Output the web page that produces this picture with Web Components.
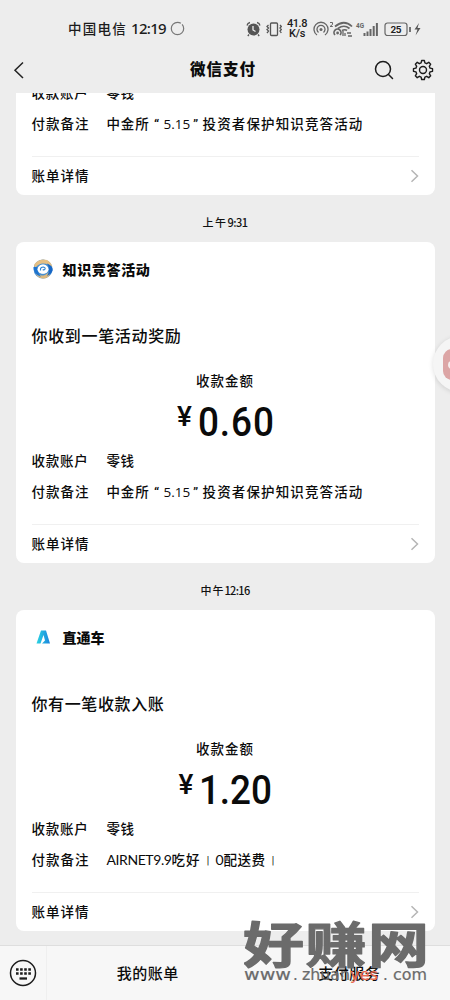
<!DOCTYPE html>
<html lang="zh-CN">
<head>
<meta charset="utf-8">
<title>微信支付</title>
<style>
body{margin:0;background:#ededed;font-family:"Noto Sans CJK SC",sans-serif;color:#0b0b0b}
</style>
</head>
<body>
<pay-app></pay-app>
<script>
const make = (name, html, after) => customElements.define(name, class extends HTMLElement {
  constructor() {
    super();
    this.attachShadow({ mode: 'open' }).innerHTML = html;
  }
  connectedCallback() { if (after) after(this); }
});

make('pay-app', `<style>
:host{display:flex;flex-direction:column;width:450px;height:1000px;overflow:hidden;position:relative;background:#ededed}
main{flex:1;min-height:0;overflow:hidden;display:flex;flex-direction:column;justify-content:flex-end;padding:0 15.5px 14px}
.num{font-family:"Open Sans",sans-serif;font-weight:400}
.q{font-family:Roboto,sans-serif}
.lat{font-family:Lato,sans-serif;font-weight:400;font-size:14px}
</style>
<status-bar></status-bar>
<nav-bar></nav-bar>
<main>
<bill-card tail>
<span slot="memo"><fit-text w="43">中金所</fit-text><fit-text class="q" w="14" c>“</fit-text><fit-text class="num" w="25" c>5.15</fit-text><fit-text class="q" w="14" c>”</fit-text><fit-text w="161">投资者保护知识竞答活动</fit-text></span></bill-card>
<time-mark><fit-text w="25">上午</fit-text><fit-text w="20">9:31</fit-text></time-mark>
<bill-card><swirl-logo slot="logo"></swirl-logo><fit-text slot="title" w="88">知识竞答活动</fit-text><fit-text slot="head" w="150">你收到一笔活动奖励</fit-text><big-num slot="amount" w="76">0.60</big-num>
<span slot="memo"><fit-text w="43">中金所</fit-text><fit-text class="q" w="14" c>“</fit-text><fit-text class="num" w="25" c>5.15</fit-text><fit-text class="q" w="14" c>”</fit-text><fit-text w="161">投资者保护知识竞答活动</fit-text></span></bill-card>
<time-mark><fit-text w="24">中午</fit-text><fit-text w="25">12:16</fit-text></time-mark>
<bill-card><peak-logo slot="logo"></peak-logo><fit-text slot="title" w="42">直通车</fit-text><fit-text slot="head" w="133">你有一笔收款入账</fit-text><big-num slot="amount" w="73">1.20</big-num>
<span slot="memo"><fit-text class="lat" w="65">AIRNET9.9</fit-text><fit-text w="29">吃好</fit-text><thin-bar></thin-bar><fit-text class="lat" w="8">0</fit-text><fit-text w="42">配送费</fit-text><thin-bar></thin-bar></span></bill-card>
</main>
<bottom-bar></bottom-bar>
<float-ball></float-ball>
<site-mark></site-mark>`);

make('thin-bar', `<style>:host{display:inline-block;width:15px;text-align:center;font:400 10px/10px Roboto,sans-serif;vertical-align:1px}</style>|`);

make('big-num', `<style>:host{display:block;height:45px}svg{display:block;overflow:visible}</style><svg height="45"><text x="1" y="36" font-family="Roboto" font-weight="500" font-size="41" fill="#0b0b0b" transform="scale(.9 1)"></text></svg>`, el => {
  const w = +el.getAttribute('w');
  const t = el.shadowRoot.querySelector('text');
  t.textContent = el.textContent.trim();
  t.setAttribute('textLength', w / .9);
  el.shadowRoot.querySelector('svg').setAttribute('width', w);
});

make('status-bar', `<style>
:host{display:flex;height:46px;box-sizing:border-box;padding:11px 28px 0 68px;align-items:center;font-size:13.5px;font-weight:500;color:#1c1c1c}
.cn{margin-top:-2px}
.time{font-family:"Noto Sans",sans-serif;font-size:15px;margin:-2px 0 0 4px}
.ring{margin-left:4px}
.sp{flex:1}
.speed{width:20px;margin:0 6px 0 5px;font:500 11px/10px Roboto,sans-serif;text-align:center}
svg{display:block;flex:none}
</style>
<fit-text class="cn" w="59">中国电信</fit-text><fit-text class="time" w="35">12:19</fit-text>
<svg class="ring" width="15" height="15" viewBox="0 0 15 15" fill="none" stroke="#777" stroke-width="1.2"><circle cx="7.5" cy="7.5" r="6.2" stroke-dasharray="32 1.5"/></svg>
<span class="sp"></span>
<svg width="36" height="16" viewBox="0 0 36 16" fill="none" stroke="#555" stroke-width="1.3"><circle cx="7.5" cy="8.5" r="6" fill="#555" stroke="none"/><path d="M1 4.5Q1.5 2 4 1.5M14 4.5Q13.500 2 11 1.500M3 13.500L1.800 15M12 13.500L13.200 15"/><path d="M7 5V9L9.500 10.500" stroke="#eee"/><rect x="24.500" y="2" width="7" height="12.500" rx="1"/><path d="M22.500 4L21 5.500L22.500 7L21 8.500L22.500 10L21 12M34 4L35.300 5.500L34 7L35.300 8.500L34 10L35.300 12"/></svg>
<div class="speed"><fit-text w="20">41.8</fit-text><br><fit-text w="16">K/s</fit-text></div>
<svg width="66" height="16" viewBox="0 0 66 16" fill="none" stroke="#666" stroke-width="1.3">
<path d="M4 14A7 7 0 1 1 12 14M5.500 11.500A4 4 0 1 1 10.500 11.500"/><circle cx="8" cy="8.500" r="1.500" fill="#666" stroke="none"/>
<path d="M17 1.500H19.500V3.500L17 5.500H19.800" stroke-width="1"/>
<path d="M22 5.500Q31 -2 39 5.500M25 7.500Q31 3 36.500 7.500M22 14A3.500 3.500 0 1 1 27 14M29 9.500Q32 8 34 9.500" stroke-width="1.700"/><circle cx="24.600" cy="12" r="1.400" fill="#666" stroke="none"/><path d="M30 10V15M32 12V15M34 12H38M35 15H39" />
<text x="43" y="6.500" font-family="Roboto" font-size="7" font-weight="700" fill="#666" stroke="none" textLength="8" lengthAdjust="spacingAndGlyphs">4G</text>
<path d="M51.500 12V15M54.500 10.500V15M57.500 8V15M60.700 5V15M63.900 2V15" stroke-width="2"/></svg>
<svg style="margin-left:5px" width="38" height="16" viewBox="0 0 38 16" fill="none" stroke="#666" stroke-width="1.200"><rect x="1" y="2" width="22" height="12.500" rx="2.500"/><path d="M26 6V11" stroke-width="1.800"/><text x="6.500" y="11.800" font-family="Inter" font-size="9" font-weight="700" fill="#222" stroke="none" textLength="11">25</text><path d="M35 2L30.500 8.500H33.500L31.500 14.500L36.500 7H33.500Z" fill="#555" stroke="none"/></svg>`);

make('nav-bar', `<style>
:host{display:flex;height:47px;align-items:center;box-sizing:border-box;padding:0 16px 0 12px}
.title{flex:1;text-align:center;font-size:15.5px;line-height:24px;font-weight:900;padding:0 0 3px 46px}
svg{display:block;flex:none}
</style>
<svg width="14" height="20" viewBox="0 0 14 20" fill="none" stroke="#222" stroke-width="1.500"><path d="M11 2.500L3 10.300L11 18"/></svg>
<div class="title"><fit-text w="66">微信支付</fit-text></div>
<svg width="20" height="20" viewBox="0 0 20 20" fill="none" stroke="#1c1c1c" stroke-width="1.500" stroke-linecap="round"><circle cx="9" cy="9" r="7.500"/><path d="M14.500 14.500L18.500 18.500"/></svg>
<svg style="margin-left:18px" width="22" height="22" viewBox="-11 -11 22 22" fill="none" stroke="#1c1c1c" stroke-width="1.400" stroke-linejoin="round"><g id="g"></g><circle r="3.500"/></svg>`, el => {
  const pts = [];
  for (let i = 0; i < 8; i++) for (const [off, r] of [[-15, 7.3], [-8, 9.6], [8, 9.6], [15, 7.3]]) {
    const a = (i * 45 + off) * Math.PI / 180;
    pts.push((r * Math.sin(a)).toFixed(2) + ' ' + (-r * Math.cos(a)).toFixed(2));
  }
  el.shadowRoot.getElementById('g').innerHTML = '<path d="M' + pts.join('L') + 'Z"/>';
});

make('time-mark', `<style>:host{display:flex;height:47px;padding-top:7px;box-sizing:border-box;flex:none;align-items:center;justify-content:center;font-size:11px;font-weight:500;color:#111}</style><slot></slot>`);

make('bill-card', `<style>
:host{display:flex;flex-direction:column;flex:none;height:321px;box-sizing:border-box;padding:0 16px;background:#fff;border-radius:8px;white-space:nowrap}
:host([tail]){height:118.500px}
:host([tail]) :is(.title,.head,.label,.amount){display:none}
.title{display:flex;align-items:center;height:53px;margin-bottom:1px;font-size:14px;font-weight:800}
.logo{width:31px;height:22px;display:flex;align-items:center}
.head{margin-top:24px;margin-bottom:1px;height:30px;line-height:30px;font-size:16px;font-weight:500}
.label{margin-top:19px;margin-bottom:1px;height:20px;line-height:20px;font-size:13.500px;font-weight:500;text-align:center}
.amount{margin-top:8.500px;height:45px;display:flex;justify-content:center;align-items:center;font:500 41px/45px Roboto,sans-serif;gap:5px;box-sizing:border-box}
.yen{font-size:28px;line-height:34px;align-self:flex-start}
.row{display:flex;height:31px;line-height:30px;font-size:13.500px;font-weight:500}
.k{width:75px;flex:none}
hr{width:100%;height:1px;border:0;background:#f0f0f0;margin:17.500px 0 0}
.foot{height:38px;display:flex;align-items:center;justify-content:space-between;font-size:13.500px;font-weight:500}
.foot fit-text{margin-top:-2px}
svg{display:block}
</style>
<div class="title"><span class="logo"><slot name="logo"></slot></span><slot name="title"></slot></div>
<div class="head"><slot name="head"></slot></div>
<div class="label"><fit-text w="58">收款金额</fit-text></div>
<div class="amount"><span class="yen">¥</span><slot name="amount"></slot></div>
<div class="row"><span class="k"><fit-text w="57">收款账户</fit-text></span><fit-text w="28">零钱</fit-text></div>
<div class="row"><span class="k"><fit-text w="58">付款备注</fit-text></span><slot name="memo"></slot></div>
<hr>
<div class="foot"><fit-text w="58">账单详情</fit-text><svg width="9" height="14" viewBox="0 0 9 14" fill="none" stroke="#b5b5b5" stroke-width="1.500"><path d="M1.500 1.200L7.500 7L1.500 12.800"/></svg></div>`);

make('swirl-logo', `<style>:host{display:block;margin-left:1px}svg{display:block}</style>
<svg width="20" height="20" viewBox="0 0 20 20" fill="none"><circle cx="10" cy="10" r="7" stroke="#4a90d0" stroke-width="5"/>
<path d="M2 4.500Q7-1 14 1Q18 3 19.500 8Q15 4 9 4.500Q4 5.500 2.500 9Q0 6.500 2 4.500Z" fill="#e5bf83"/>
<path d="M3 15Q8 17.500 12 16Q15 15 17 11.500Q18.500 17 12.500 19.300Q6 20.500 3 15Z" fill="#dcb87e"/>
<path d="M14 4.500Q20.500 7 19.500 12Q18 15.500 14 17Q18 10 14 4.500Z" fill="#1767c6"/><path d="M.5 8Q.5 15 8 18Q4 13 4.500 8Z" fill="#1d73cf"/>
<ellipse cx="10" cy="10.200" rx="5.500" ry="4.500" fill="#fff"/><path d="M7.500 11.500Q7 8 10.500 8Q12.500 8.500 12 10Q11 11.500 9.800 10.500" stroke="#2e83d2" stroke-width="1.200"/></svg>`);

make('peak-logo', `<style>:host{display:block;margin-left:4px}svg{display:block}</style>
<svg width="15" height="14" viewBox="0 0 15 14"><defs><linearGradient id="a"><stop stop-color="#2bd5e2"/><stop offset="1" stop-color="#1b83dd"/></linearGradient></defs><path d="M5 .5H10L14 13.500H6L9 10.500L7.500 5L4.500 13.500H.5Z" fill="url(#a)"/></svg>`);

make('bottom-bar', `<style>
:host{display:flex;flex:none;height:55px;box-sizing:border-box;border-top:1px solid #dedede;background:#f7f7f7;font-size:15px;font-weight:500}
.kb{width:47px;box-sizing:border-box;padding:13px 0 0 9px;border-right:1px solid #efefef}
.i{flex:1;display:flex;align-items:center;justify-content:center;padding-bottom:2px}
svg{display:block}
</style>
<div class="kb"><svg width="28" height="28" viewBox="0 0 28 28"><circle cx="14" cy="14" r="12.500" fill="none" stroke="#1c1c1c" stroke-width="1.500"/><path d="M7 10.500H22M7 14.500H22" stroke="#1c1c1c" stroke-width="2.500" stroke-dasharray="2.600 1.500"/><path d="M10.500 19.500H18" stroke="#1c1c1c" stroke-width="2.300"/></svg></div>
<div class="i"><fit-text w="62">我的账单</fit-text></div><div class="i"><fit-text w="62">支付服务</fit-text></div>`);

make('float-ball', `<style>
:host{position:absolute;left:433px;top:336px;width:56px;height:56px;border-radius:50%;background:#f5f5f5;box-shadow:0 1px 5px #0002}
i{display:block;margin:13px 0 0 10px;width:32px;height:31px;border-radius:9px;background:#dca5a5}
b{display:block;position:absolute;left:15px;top:25px;width:20px;height:8px;border-radius:4px;background:#f7eeee}
</style><i></i><b></b>`);

make('site-mark', `<style>
:host{position:absolute;left:244px;top:918px;width:184px;height:70px}
svg{display:block}
</style>
<svg width="184" height="70" viewBox="0 0 184 70"><g fill="#6b6b6b" stroke="#6b6b6b" stroke-linejoin="round"><text transform="translate(-1 45) scale(1 .8)" font-family="Noto Sans CJK SC" font-weight="700" font-size="61" stroke-width="1.500" textLength="186">好赚网</text>
<g font-family="DejaVu Sans" font-size="15" stroke-width=".2"><text x="0" y="62" textLength="47" lengthAdjust="spacingAndGlyphs">www</text><text x="49" y="62">.</text><text x="58" y="62" textLength="48" lengthAdjust="spacingAndGlyphs">zhuan</text><text x="106" y="62" fill="#e96a50" stroke="#e96a50" textLength="28" lengthAdjust="spacingAndGlyphs">yes</text><text x="139" y="62">.</text><text x="149" y="62" textLength="34" lengthAdjust="spacingAndGlyphs">com</text></g></g></svg>`);

/* Spreads its text over the width given in the w attribute, or centres it there when c is set. */
make('fit-text', `<style>:host{display:inline-block;white-space:pre}</style><span><slot></slot></span>`, el => {
  const span = el.shadowRoot.querySelector('span');
  const w = +el.getAttribute('w');
  el.style.width = w + 'px';
  if (el.hasAttribute('c')) {
    el.style.textAlign = 'center';
    return;
  }
  const n = [...el.textContent].length;
  const natural = span.getBoundingClientRect().width;
  span.style.letterSpacing = ((w - natural) / n) + 'px';
});
</script>
</body>
</html>
